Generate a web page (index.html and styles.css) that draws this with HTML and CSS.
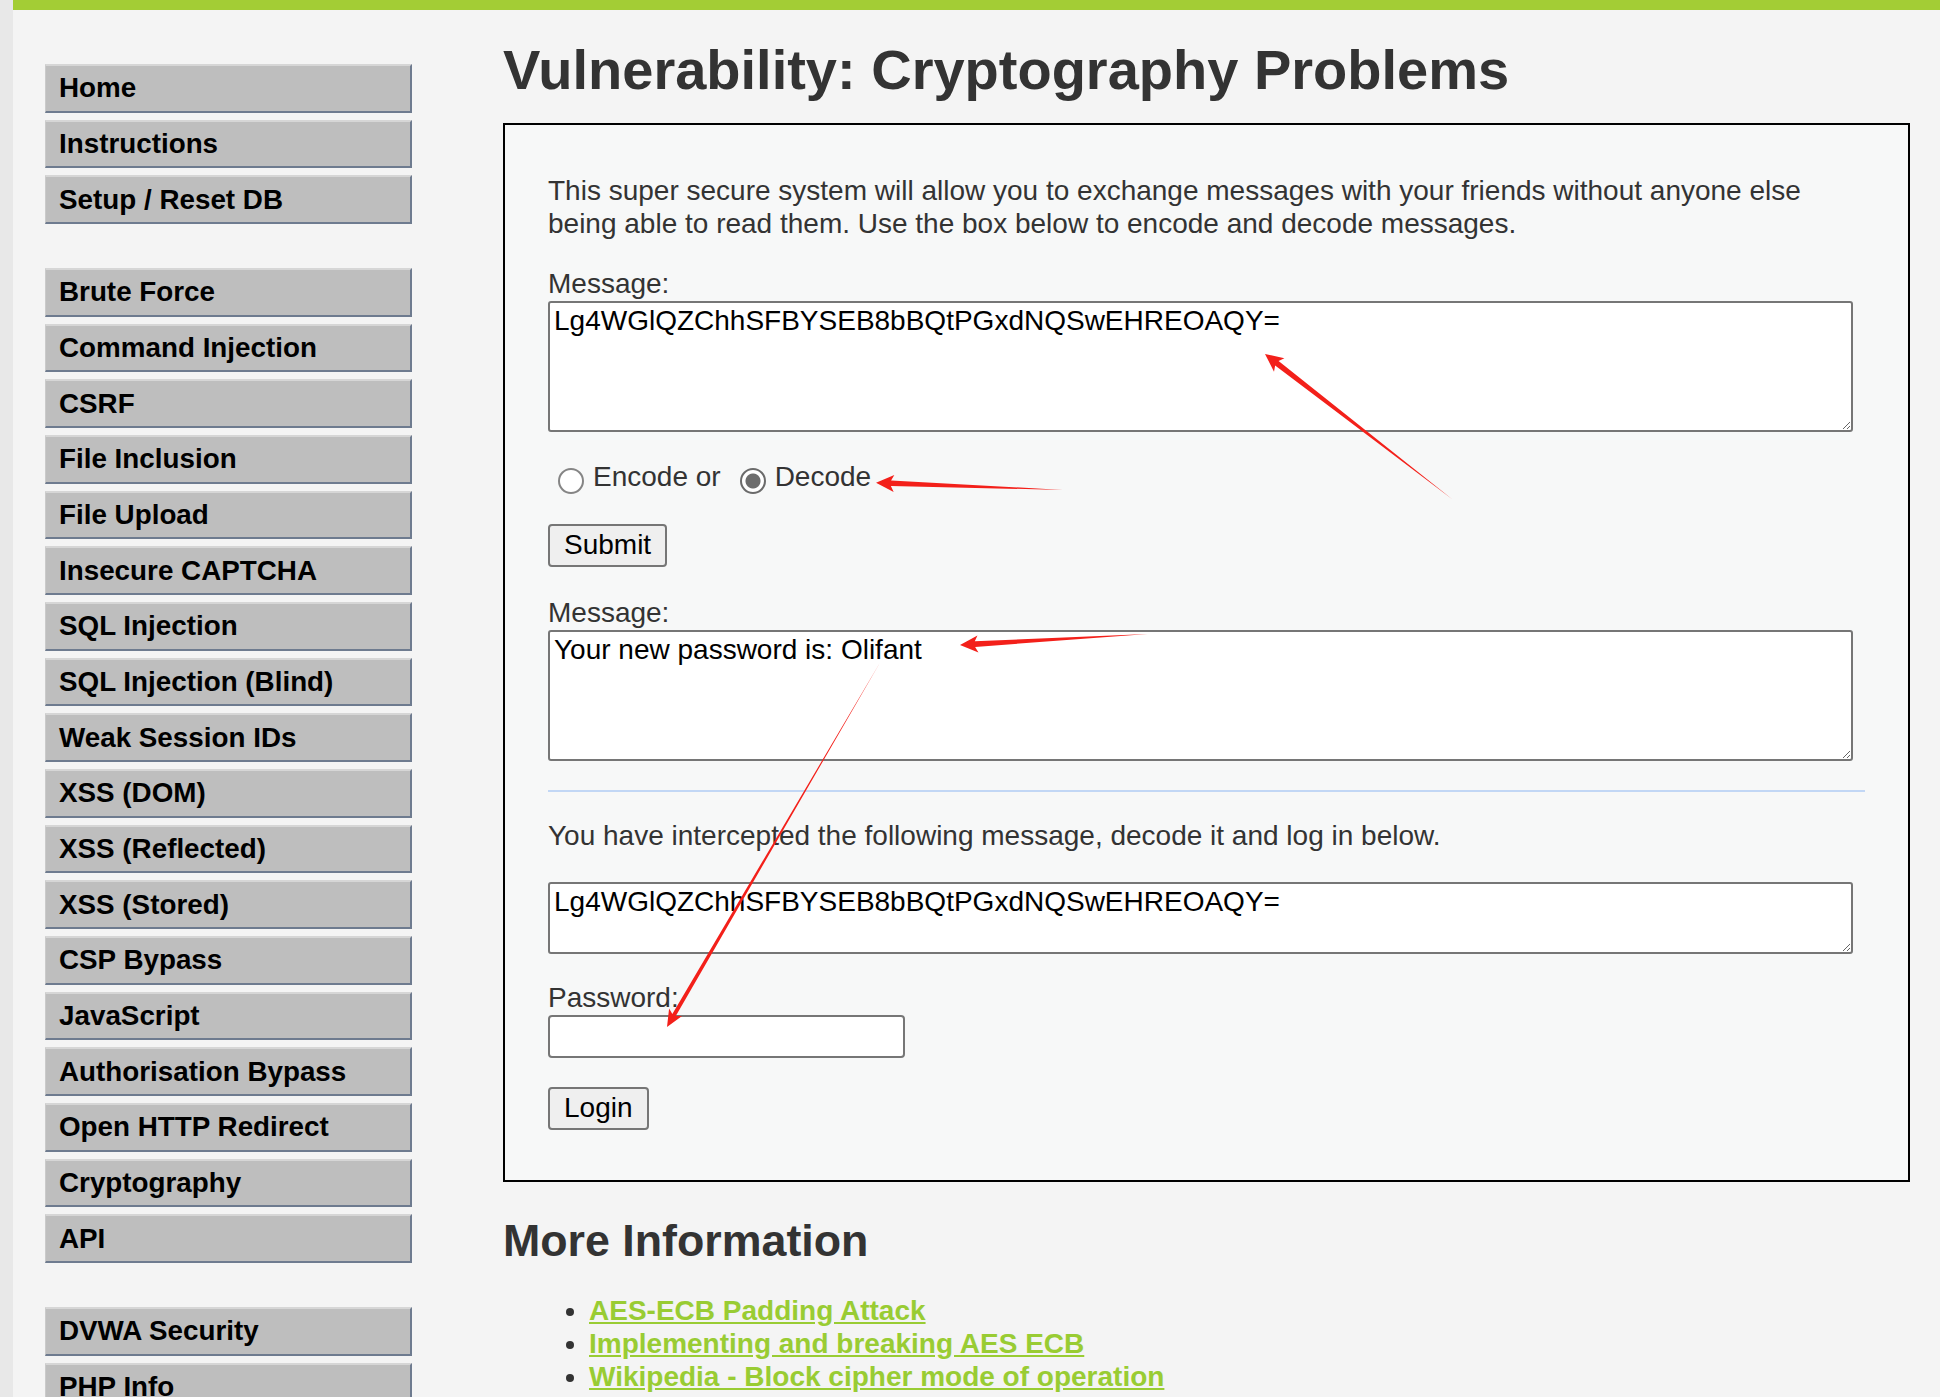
FILE: index.html
```html
<!DOCTYPE html>
<html lang="en">
<head>
<meta charset="utf-8">
<title>Vulnerability: Cryptography Problems</title>
<link rel="stylesheet" href="styles.css">
</head>
<body>
<div class="frame">
  <div class="edge"></div>
  <div class="page">
    <div class="topbar"></div>
    <div class="layout">
      <nav class="menu">
        <ul class="menu-block">
          <li><a href="#">Home</a></li>
          <li><a href="#">Instructions</a></li>
          <li><a href="#">Setup / Reset DB</a></li>
        </ul>
        <ul class="menu-block">
          <li><a href="#">Brute Force</a></li>
          <li><a href="#">Command Injection</a></li>
          <li><a href="#">CSRF</a></li>
          <li><a href="#">File Inclusion</a></li>
          <li><a href="#">File Upload</a></li>
          <li><a href="#">Insecure CAPTCHA</a></li>
          <li><a href="#">SQL Injection</a></li>
          <li><a href="#">SQL Injection (Blind)</a></li>
          <li><a href="#">Weak Session IDs</a></li>
          <li><a href="#">XSS (DOM)</a></li>
          <li><a href="#">XSS (Reflected)</a></li>
          <li><a href="#">XSS (Stored)</a></li>
          <li><a href="#">CSP Bypass</a></li>
          <li><a href="#">JavaScript</a></li>
          <li><a href="#">Authorisation Bypass</a></li>
          <li><a href="#">Open HTTP Redirect</a></li>
          <li><a href="#">Cryptography</a></li>
          <li><a href="#">API</a></li>
        </ul>
        <ul class="menu-block">
          <li><a href="#">DVWA Security</a></li>
          <li><a href="#">PHP Info</a></li>
        </ul>
      </nav>
      <main class="content">
        <h1>Vulnerability: Cryptography Problems</h1>
        <div class="code-area">
          <p class="intro">This super secure system will allow you to exchange messages with your friends without anyone else being able to read them. Use the box below to encode and decode messages.</p>
          <div class="lbl">Message:</div>
          <textarea class="ta ta-big">Lg4WGlQZChhSFBYSEB8bBQtPGxdNQSwEHREOAQY=</textarea>
          <div class="choice"><span class="radio"></span><span class="opt">Encode or</span><span class="radio on"></span><span class="opt">Decode</span></div>
          <button class="btn btn-submit" type="button">Submit</button>
          <div class="lbl lbl-2">Message:</div>
          <textarea class="ta ta-big">Your new password is: Olifant</textarea>
          <div class="rule"></div>
          <div class="lbl lbl-intercept">You have intercepted the following message, decode it and log in below.</div>
          <textarea class="ta ta-small">Lg4WGlQZChhSFBYSEB8bBQtPGxdNQSwEHREOAQY=</textarea>
          <div class="lbl lbl-pass">Password:</div>
          <input class="pass" type="password">
          <button class="btn btn-login" type="button">Login</button>
        </div>
        <h2>More Information</h2>
        <ul class="links">
          <li><a href="#">AES-ECB Padding Attack</a></li>
          <li><a href="#">Implementing and breaking AES ECB</a></li>
          <li><a href="#">Wikipedia - Block cipher mode of operation</a></li>
        </ul>
      </main>
    </div>
  </div>
</div>
<svg class="marks" width="1940" height="1397" viewBox="0 0 1940 1397" aria-hidden="true">
  <polygon class="arrow" transform="translate(1265 354) rotate(217.8)" points="0,0 -18,-8.5 -15,-2.8 -237,0 -15,2.8 -18,8.5"/>
  <polygon class="arrow" transform="translate(876 482.7) rotate(182.2)" points="0,0 -18,-8.5 -15,-2.8 -187,0 -15,2.8 -18,8.5"/>
  <polygon class="arrow" transform="translate(960 645) rotate(176.65)" points="0,0 -18,-8.5 -15,-2.8 -188,0 -15,2.8 -18,8.5"/>
  <polygon class="arrow" transform="translate(667 1027) rotate(120.3)" points="0,0 -17,-7.5 -14,-2 -422,0 -14,2 -17,7.5"/>
</svg>
</body>
</html>
```
FILE: styles.css
```css
* { box-sizing: border-box; }
html, body { margin: 0; padding: 0; }
html { overflow: hidden; }
body {
  font-family: "Liberation Sans", Arial, sans-serif;
  font-size: 28px;
  color: #333;
  background: #f4f4f4;
  height: 1397px;
  overflow: hidden;
  position: relative;
}
.frame { display: flex; height: 100%; }
.edge { width: 13px; flex: none; background: #e8e8e8; }
.page { flex: 1; display: flex; flex-direction: column; }
.topbar { height: 10px; flex: none; background: #a3cd35; }
.layout {
  display: grid;
  grid-template-columns: 367px 1407px;
  column-gap: 91px;
  padding-left: 32px;
  align-items: start;
}

/* menu */
.menu { padding-top: 54px; }
.menu-block { list-style: none; margin: 0 0 44.1px; padding: 0; }
.menu-block li { margin-bottom: 7px; }
.menu-block a {
  display: block;
  height: 48.67px;
  padding: 6.4px 0 0 13px;
  background: #bebebe;
  border-top: 2px solid #d6d6d6;
  border-left: 1px solid #cacaca;
  border-right: 2px solid #6e7b8f;
  border-bottom: 2px solid #6e7b8f;
  color: #000;
  font-weight: bold;
  font-size: 27.8px;
  line-height: 32.2px;
  text-decoration: none;
  white-space: nowrap;
  overflow: hidden;
}

/* content */
.content { padding-top: 28px; }
h1 {
  margin: 0 0 22px;
  font-size: 56px;
  line-height: 63px;
  font-weight: bold;
  color: #333;
  white-space: nowrap;
}
.code-area {
  border: 2px solid #000;
  background: #f7f8f8;
  padding: 21px 43.5px 50px 43px;
}
.intro { margin: 28px 0 27px; line-height: 33px; }
.lbl { line-height: 33px; }
.lbl-2 { margin-top: 29px; }
.lbl-intercept { margin-top: 27px; }
.lbl-pass { margin-top: 27px; }
.ta {
  display: block;
  margin: 1px 0 0;
  width: 1305px;
  padding: 2px 4px;
  border: 2px solid #767676;
  border-radius: 3px;
  background: #fff;
  color: #000;
  font-family: "Liberation Sans", Arial, sans-serif;
  font-size: 28px;
  line-height: 32.2px;
}
.ta-big { height: 131.3px; }
.ta-small { height: 71.6px; margin-top: 30px; }

.choice { margin-top: 28px; line-height: 33px; white-space: nowrap; }
.radio {
  display: inline-block;
  width: 26px;
  height: 26px;
  border-radius: 50%;
  border: 2px solid #858585;
  background: #fff;
  vertical-align: -7.5px;
  margin: 0 9px 0 10px;
}
.radio.on {
  margin-left: 19px;
  border-color: #6b6b6b;
  background: radial-gradient(circle, #6d6d6d 0 7px, #fff 8px);
}

.btn {
  display: block;
  padding: 0 14px;
  border: 2px solid #767676;
  border-radius: 4px;
  background: #efefef;
  color: #000;
  font-family: "Liberation Sans", Arial, sans-serif;
  font-size: 28px;
}
.btn-submit { height: 42.4px; margin-top: 30.5px; }
.btn-login { height: 43.3px; margin-top: 29px; }

.rule { height: 2px; margin-top: 29px; background: #c2d7f5; }

.pass {
  display: block;
  margin-top: 1px;
  width: 357px;
  height: 43px;
  border: 2px solid #767676;
  border-radius: 4px;
  background: #fff;
}

h2 {
  margin: 33.5px 0 0;
  font-size: 44.75px;
  line-height: 50.6px;
  font-weight: bold;
  color: #333;
}
.links { margin: 27.6px 0 0; padding-left: 86px; line-height: 33.3px; }
.links a { color: #99cc33; font-weight: bold; text-decoration: underline; }

/* annotation overlay */
.marks { position: absolute; left: 0; top: 0; pointer-events: none; }
.arrow { fill: #f3201a; }
```
